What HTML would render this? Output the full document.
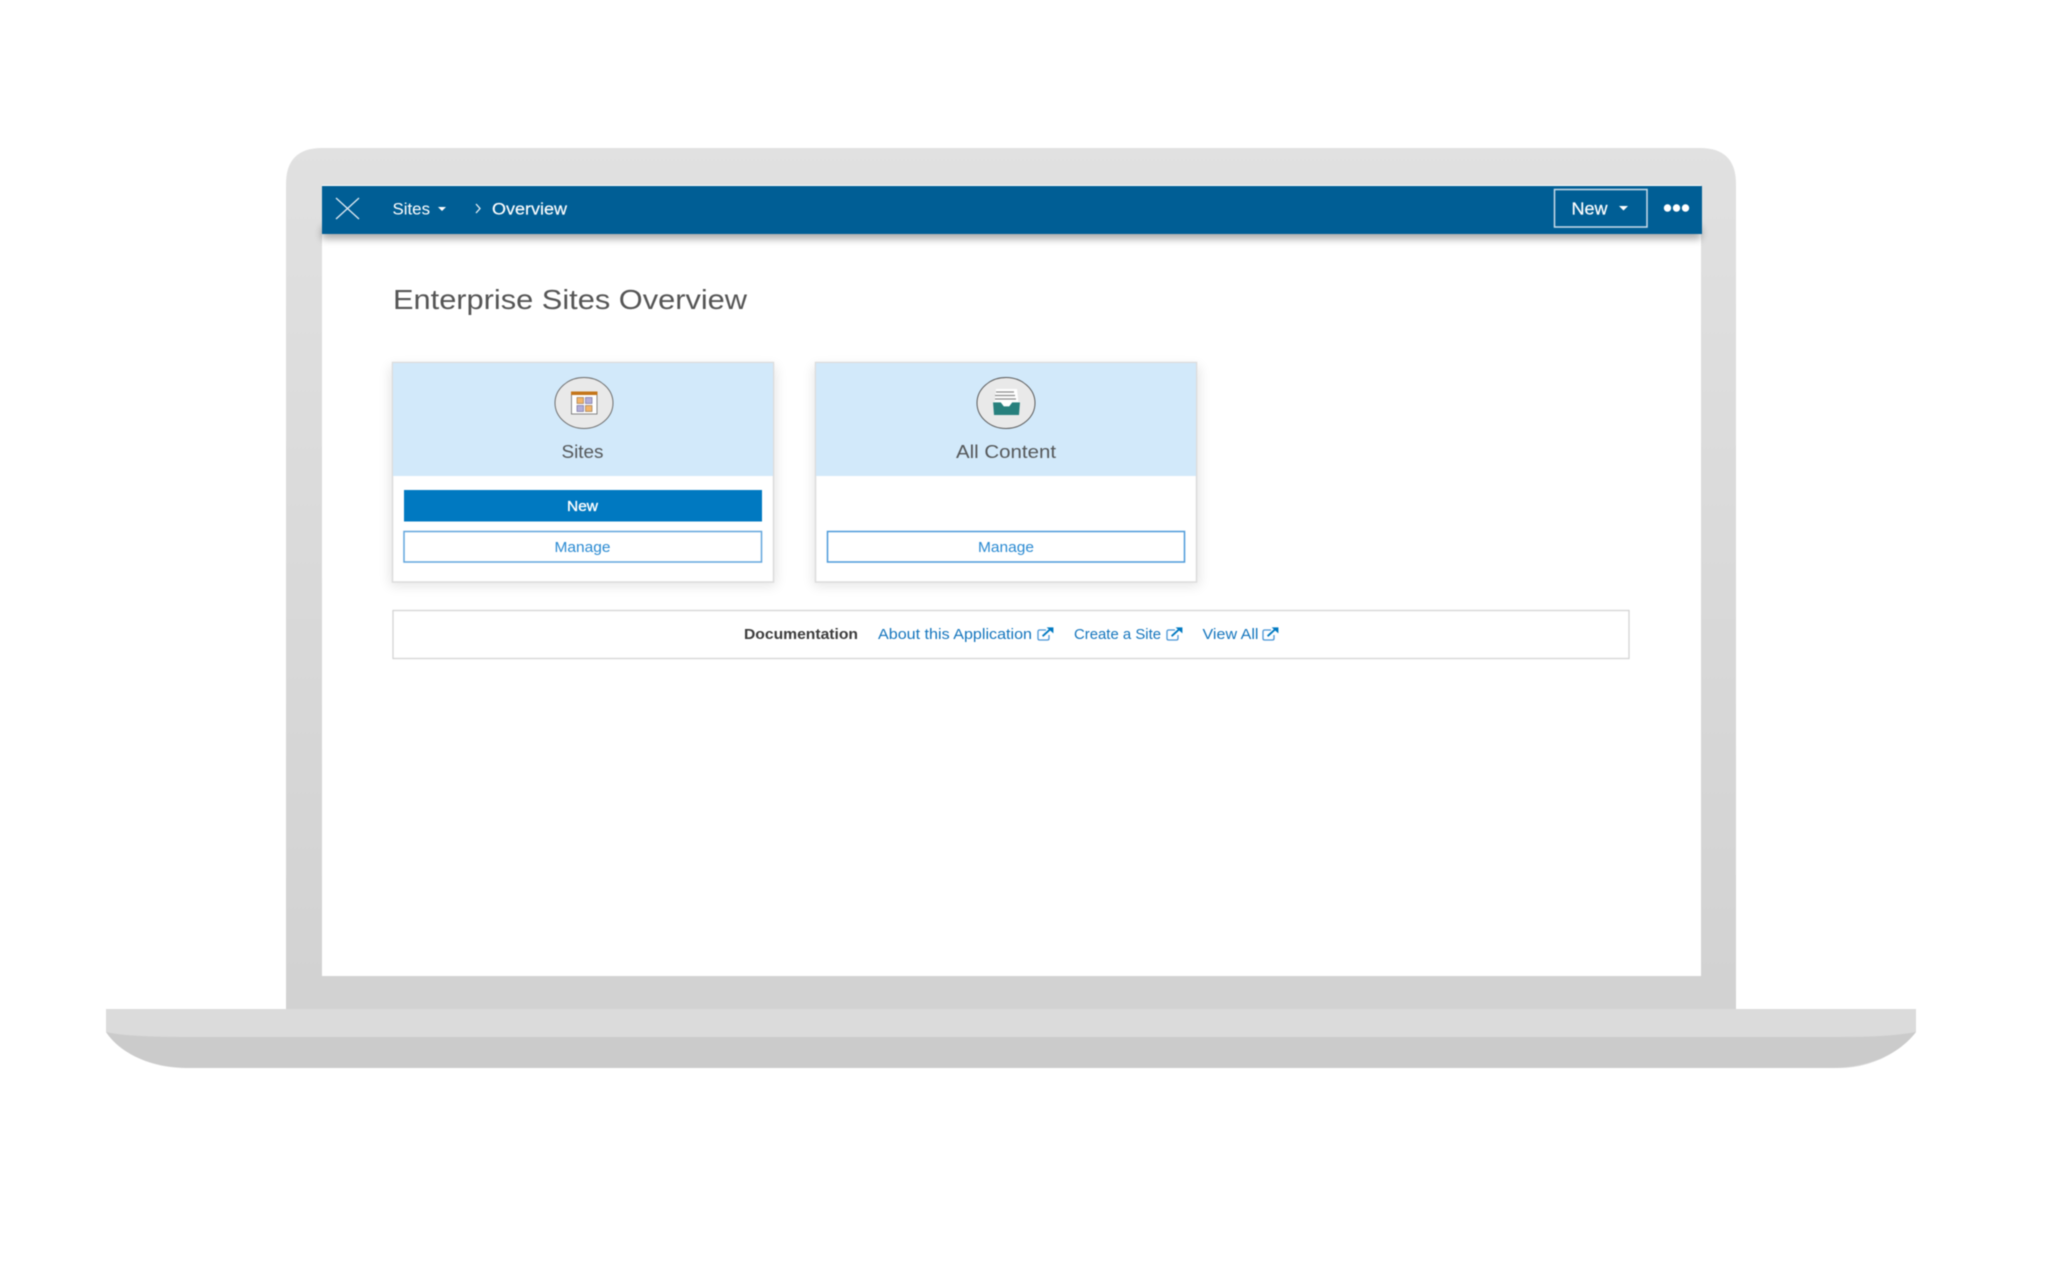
<!DOCTYPE html>
<html lang="en">
<head>
<meta charset="utf-8">
<title>Enterprise Sites Overview</title>
<style>
html,body{margin:0;padding:0;background:#fff;width:2062px;height:1278px;overflow:hidden}
svg{display:block;filter:blur(0.45px)}
text{font-family:"Liberation Sans",sans-serif}
</style>
</head>
<body>
<svg width="2062" height="1278" viewBox="0 0 2062 1278" xmlns="http://www.w3.org/2000/svg">
<defs>
<linearGradient id="bezel" x1="0" y1="0" x2="0" y2="1"><stop offset="0" stop-color="#e1e1e1"/><stop offset="1" stop-color="#d2d2d2"/></linearGradient>
<filter id="hs" x="-5%" y="-50%" width="110%" height="250%"><feGaussianBlur stdDeviation="4"/></filter>
<filter id="cs" x="-10%" y="-10%" width="120%" height="120%"><feGaussianBlur stdDeviation="6"/></filter>
<symbol id="ext" viewBox="0 0 17 14" overflow="visible">
<path d="M9 3H2.6Q1 3 1 4.6V11.4Q1 13 2.6 13H10.4Q12 13 12 11.4V8" fill="none" stroke="#4a96d6" stroke-width="1.300"/>
<path d="M5.6 9.2L12.6 2.8" fill="none" stroke="#0079c1" stroke-width="1.900"/>
<path d="M9.6 0.4H16.4V6.4Z" fill="#0079c1"/>
</symbol>
</defs>

<path d="M286 1009V184Q286 148 322 148H1700Q1736 148 1736 184V1009Z" fill="url(#bezel)"/>
<rect x="322" y="185" width="1379" height="791" fill="#fff"/>

<path d="M106 1009H1916V1032C1900 1053 1870 1068 1840 1068H185C150 1068 120 1053 106 1032Z" fill="#dbdbdb"/>
<path d="M106 1032C120 1035 140 1037 185 1037H1840C1880 1037 1900 1035 1916 1032C1900 1053 1870 1068 1830 1068H190C150 1068 120 1053 106 1032Z" fill="#cbcbcb"/>

<rect x="322" y="227" width="1379" height="12" fill="#000" opacity=".33" filter="url(#hs)"/>
<rect x="322" y="186" width="1380" height="48" fill="#005e95"/>

<path d="M336 198L359 219M359 198L336 219" stroke="#dfeaf2" stroke-width="1.300" fill="none"/>
<text x="392.500" y="214.500" font-size="17" fill="#fff" textLength="37.500" lengthAdjust="spacingAndGlyphs">Sites</text>
<path d="M438 207H446L442 211Z" fill="#fff"/>
<path d="M476 204L480 208.500L476 213" fill="none" stroke="#e8f0f6" stroke-width="1.300"/>
<text x="492" y="214.500" font-size="17" fill="#fff" stroke="#fff" stroke-width=".15" textLength="75" lengthAdjust="spacingAndGlyphs">Overview</text>

<rect x="1554.500" y="189.500" width="92.500" height="37.500" fill="none" stroke="#c9dce9" stroke-width="1.500"/>
<text x="1571.500" y="214.500" font-size="17.500" fill="#fff" stroke="#fff" stroke-width=".2" textLength="36" lengthAdjust="spacingAndGlyphs">New</text>
<path d="M1619 206H1628L1623.500 210.500Z" fill="#fff"/>
<circle cx="1667.500" cy="208" r="3.700" fill="#fff"/><circle cx="1676.500" cy="208" r="3.700" fill="#fff"/><circle cx="1685.500" cy="208" r="3.700" fill="#fff"/>

<text x="393" y="309" font-size="28" fill="#555" textLength="354" lengthAdjust="spacingAndGlyphs">Enterprise Sites Overview</text>

<!-- card shadows -->
<rect x="390" y="366" width="386" height="220" fill="#000" opacity=".1" filter="url(#cs)"/>
<rect x="813.500" y="366" width="386" height="220" fill="#000" opacity=".1" filter="url(#cs)"/>

<!-- Sites card -->
<rect x="392.500" y="362.500" width="381" height="219.500" fill="#fff" stroke="#dcdcdc" stroke-width="1.500"/>
<rect x="393" y="363" width="380" height="113" fill="#d2e9fa"/>
<ellipse cx="584" cy="403" rx="29" ry="25.500" fill="#e9e9e9" stroke="#6e6e6e" stroke-width="1"/>
<rect x="571.500" y="392" width="25.500" height="22" fill="#fff" stroke="#6a6a6a" stroke-width=".8"/>
<rect x="571" y="391.500" width="26.500" height="3.500" fill="#c4761b"/>
<rect x="577" y="397.500" width="6.500" height="6" fill="#f3b468" stroke="#9a7a55" stroke-width=".7"/>
<rect x="585.500" y="397.500" width="6.500" height="6" fill="#b3add8" stroke="#77729f" stroke-width=".7"/>
<rect x="577" y="405.500" width="6.500" height="6" fill="#b3add8" stroke="#77729f" stroke-width=".7"/>
<rect x="585.500" y="405.500" width="6.500" height="6" fill="#f3b468" stroke="#9a7a55" stroke-width=".7"/>
<text x="582.500" y="458" font-size="18.500" fill="#55585a" text-anchor="middle" textLength="42" lengthAdjust="spacingAndGlyphs">Sites</text>
<rect x="404" y="490" width="358" height="31.500" fill="#0079c1"/>
<text x="582.500" y="511" font-size="15" fill="#fff" stroke="#fff" stroke-width=".35" text-anchor="middle" textLength="31" lengthAdjust="spacingAndGlyphs">New</text>
<rect x="404" y="531.500" width="357.500" height="30.500" fill="#fff" stroke="#62a6dd" stroke-width="1.500"/>
<text x="582.500" y="552" font-size="15" fill="#2a8ad2" text-anchor="middle" textLength="56" lengthAdjust="spacingAndGlyphs">Manage</text>

<!-- All Content card -->
<rect x="815.500" y="362.500" width="381" height="219.500" fill="#fff" stroke="#dcdcdc" stroke-width="1.500"/>
<rect x="816" y="363" width="380" height="113" fill="#d2e9fa"/>
<ellipse cx="1006" cy="403" rx="29" ry="25.500" fill="#e9e9e9" stroke="#5a5a5a" stroke-width="1"/>
<path d="M996 389H1017L1019 408H994Z" fill="#fff"/>
<path d="M996 392H1014M995 395.500H1015M995 399H1016" stroke="#8d8d8d" stroke-width="1.300" fill="none"/>
<path d="M993 402H1001L1004 406H1009L1012 402H1020L1019 415H994Z" fill="#27807d"/>
<path d="M993 402H1001L1004 406H1009L1012 402H1020" fill="none" stroke="#fff" stroke-width=".8"/>
<text x="1006" y="458" font-size="18.500" fill="#55585a" text-anchor="middle" textLength="100" lengthAdjust="spacingAndGlyphs">All Content</text>
<rect x="827.500" y="531.500" width="357" height="30.500" fill="#fff" stroke="#4c9ada" stroke-width="1.500"/>
<text x="1006" y="552" font-size="15" fill="#2a8ad2" text-anchor="middle" textLength="56" lengthAdjust="spacingAndGlyphs">Manage</text>

<!-- Documentation bar -->
<rect x="393" y="610.500" width="1236" height="48" fill="#fff" stroke="#d4d4d4" stroke-width="1.300"/>
<text x="744" y="639" font-size="15" font-weight="bold" fill="#3c3c3c" textLength="114" lengthAdjust="spacingAndGlyphs">Documentation</text>
<text x="878" y="639" font-size="15" fill="#1475bd" textLength="154" lengthAdjust="spacingAndGlyphs">About this Application</text>
<use href="#ext" x="1037" y="627" width="17" height="14"/>
<text x="1074" y="639" font-size="15" fill="#1475bd" textLength="87" lengthAdjust="spacingAndGlyphs">Create a Site</text>
<use href="#ext" x="1166" y="627" width="17" height="14"/>
<text x="1202.500" y="639" font-size="15" fill="#1475bd" textLength="56" lengthAdjust="spacingAndGlyphs">View All</text>
<use href="#ext" x="1262" y="627" width="17" height="14"/>
</svg>
</body>
</html>
